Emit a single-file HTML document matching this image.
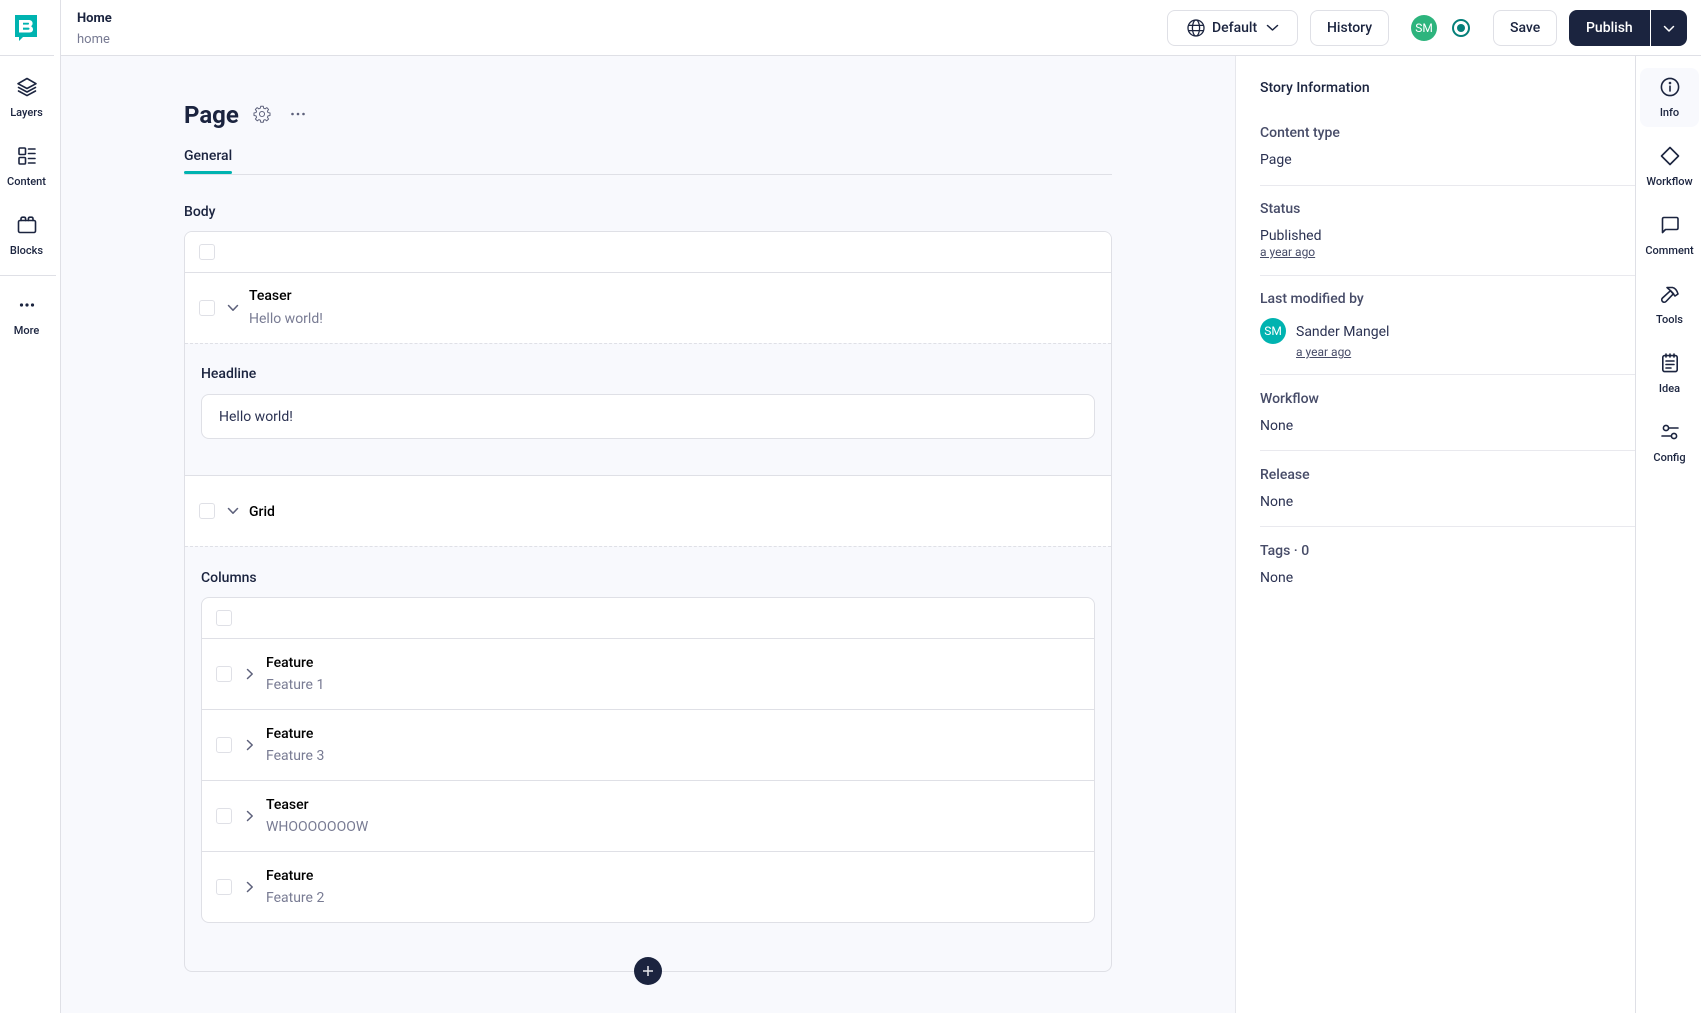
<!DOCTYPE html>
<html><head><meta charset="utf-8"><title>Home</title>
<style>
*{box-sizing:border-box}
html,body{margin:0;padding:0;width:1701px;height:1013px;overflow:hidden;background:#fff;font-family:"Roboto","Liberation Sans",sans-serif;color:#1b243f}
.a{position:absolute}
.t{position:absolute;line-height:20px;height:20px;white-space:nowrap;font-size:14px;margin-top:1px}
.m{font-weight:500}.b{font-weight:700}
.g{color:#787b93}
.s{color:#474c68}
.c{width:16px;height:16px;border:1px solid #dfe0e6;border-radius:3px;background:#fff;position:absolute}
.lb{position:absolute;font-size:11px;font-weight:500;line-height:14px;text-align:center;white-space:nowrap;margin-top:1px}
.ic{position:absolute;width:24px;height:24px;fill:none;stroke:#1b243f;stroke-width:1.6;stroke-linecap:round;stroke-linejoin:round}
.ln{position:absolute;background:#dfe0e6;height:1px}
.pl{position:absolute;background:#e9e9ee;height:1px;left:1260px;width:375px}
.btn{position:absolute;top:10px;height:36px;border:1px solid #dfe0e6;border-radius:8px;background:#fff}
.ch{position:absolute;fill:none;stroke:#5d617b;stroke-width:1.5;stroke-linecap:round;stroke-linejoin:round}
u{text-underline-offset:1px}
</style></head><body>
<!-- backgrounds -->
<div class="a" style="left:61px;top:56px;width:1174px;height:957px;background:#f8f9fd"></div>
<div class="a" style="left:60px;top:0;width:1px;height:1013px;background:#dfe0e6"></div>
<div class="a" style="left:60px;top:55px;width:1641px;height:1px;background:#dfe0e6"></div>
<div class="a" style="left:1235px;top:56px;width:1px;height:957px;background:#e6e7ec"></div>
<div class="a" style="left:1635px;top:56px;width:1px;height:957px;background:#dfe0e6"></div>
<div class="ln" style="left:0;top:55px;width:54px"></div>
<div class="ln" style="left:0;top:275px;width:56px"></div>

<!-- logo -->
<svg class="a" style="left:15px;top:15px" width="22" height="26" viewBox="0 0 22 26"><path fill="#00b3b0" fill-rule="evenodd" d="M0 0H22V22H8L4 26V22H0ZM4 5V17.5H14.5C16.8 17.5 18 16.2 18 14.4C18 12.9 17.2 11.8 16 11.2C17 10.6 17.6 9.6 17.6 8.4C17.6 6.2 16 5 13.6 5ZM8 7.8H13.4C13.8 7.8 14 8.1 14 8.6C14 9.2 13.7 9.6 13 9.6H8ZM8 12.6H13.4C14.2 12.6 14.5 13.1 14.5 13.6C14.5 14.2 14.2 14.7 13.4 14.7H8Z"/></svg>

<!-- left sidebar -->
<svg class="ic" style="left:15px;top:75px" viewBox="0 0 24 24"><path d="M12 3.5 21 8.7 12 13.5 3 8.7Z"/><path d="M3.5 12.4 12 17 20.5 12.4"/><path d="M3.5 16 12 20.6 20.5 16"/></svg>
<div class="lb" style="left:0;top:105px;width:53px">Layers</div>
<svg class="ic" style="left:15px;top:144px" viewBox="0 0 24 24"><rect x="4" y="4" width="6.5" height="6.5" rx="1"/><rect x="4" y="13.5" width="6.5" height="6.5" rx="1"/><path d="M13.5 5H20M13.5 9.5H20M13.5 14.5H20M13.5 19H20"/></svg>
<div class="lb" style="left:0;top:174px;width:53px">Content</div>
<svg class="ic" style="left:15px;top:213px" viewBox="0 0 24 24"><rect x="3.5" y="7.5" width="17" height="12" rx="1.5"/><path d="M6 7.5V5.8C6 4.8 6.8 4.2 7.6 4.2H9C9.9 4.2 10.6 4.8 10.6 5.8V7.5M13.4 7.5V5.8C13.4 4.8 14.1 4.2 15 4.2H16.4C17.3 4.2 18 4.8 18 5.8V7.5"/></svg>
<div class="lb" style="left:0;top:243px;width:53px">Blocks</div>
<svg class="a" style="left:19px;top:302px" width="16" height="6"><circle cx="2.5" cy="3" r="1.6" fill="#1b243f"/><circle cx="8" cy="3" r="1.6" fill="#1b243f"/><circle cx="13.5" cy="3" r="1.6" fill="#1b243f"/></svg>
<div class="lb" style="left:0;top:323px;width:53px">More</div>

<!-- header -->
<div class="t b" style="left:77px;top:8px;font-size:13px">Home</div>
<div class="t g" style="left:77px;top:29px;font-size:13px">home</div>

<div class="btn" style="left:1167px;width:131px"></div>
<svg class="a" style="left:1187px;top:19px;fill:none;stroke:#1b243f;stroke-width:1.3" width="18" height="18" viewBox="0 0 18 18"><circle cx="9" cy="9" r="8"/><ellipse cx="9" cy="9" rx="3.6" ry="8"/><path d="M1.4 6.4H16.6M1.4 11.6H16.6"/></svg>
<div class="t m" style="left:1212px;top:17px">Default</div>
<svg class="a" style="left:1266px;top:24px;fill:none;stroke:#1b243f;stroke-width:1.5;stroke-linecap:round;stroke-linejoin:round" width="13" height="8"><path d="M1.5 1.5 6.5 6 11.5 1.5"/></svg>
<div class="btn" style="left:1310px;width:79px"></div>
<div class="t m" style="left:1327px;top:17px">History</div>
<div class="a" style="left:1411px;top:15px;width:26px;height:26px;border-radius:50%;background:#2db47d;color:#fff;font-size:12px;line-height:27px;text-align:center">SM</div>
<div class="a" style="left:1452px;top:19px;width:18px;height:18px;border-radius:50%;border:2.2px solid #05807a"></div>
<div class="a" style="left:1457px;top:24px;width:8px;height:8px;border-radius:50%;background:#05807a"></div>
<div class="btn" style="left:1493px;width:64px"></div>
<div class="t m" style="left:1510px;top:17px">Save</div>
<div class="a" style="left:1569px;top:10px;width:118px;height:36px;border-radius:8px;background:#1b243f"></div>
<div class="a" style="left:1650px;top:10px;width:1px;height:36px;background:#fff"></div>
<div class="t m" style="left:1586px;top:17px;color:#fff">Publish</div>
<svg class="a" style="left:1663px;top:25px;fill:none;stroke:#fff;stroke-width:1.5;stroke-linecap:round;stroke-linejoin:round" width="12" height="8"><path d="M1.5 1.5 6 6 10.5 1.5"/></svg>

<!-- page heading -->
<div class="t b" style="left:184px;top:104px;font-size:24px;line-height:20px">Page</div>
<svg class="a" style="left:253px;top:105px;fill:none;stroke:#5d617b;stroke-width:1.3;stroke-linejoin:round" width="18" height="18" viewBox="0 0 24 24"><path d="M10.3 2.8h3.4l.5 2.7 1.9.8 2.3-1.6 2.4 2.4-1.6 2.3.8 1.9 2.7.5v3.4l-2.7.5-.8 1.9 1.6 2.3-2.4 2.4-2.3-1.6-1.9.8-.5 2.7h-3.4l-.5-2.7-1.9-.8-2.3 1.6-2.4-2.4 1.6-2.3-.8-1.9-2.7-.5v-3.4l2.7-.5.8-1.9L3.1 7.1 5.5 4.7l2.3 1.6 1.9-.8z" transform="translate(0 -1.2)"/><circle cx="12" cy="12" r="3.4"/></svg>
<svg class="a" style="left:290px;top:111px" width="16" height="6"><circle cx="2.5" cy="3" r="1.3" fill="#5d617b"/><circle cx="8" cy="3" r="1.3" fill="#5d617b"/><circle cx="13.5" cy="3" r="1.3" fill="#5d617b"/></svg>
<div class="t m" style="left:184px;top:145px">General</div>
<div class="a" style="left:184px;top:174px;width:928px;height:1px;background:#dfe0e6"></div>
<div class="a" style="left:184px;top:171px;width:48px;height:3px;background:#00b3b0;border-radius:2px"></div>
<div class="t m" style="left:184px;top:201px">Body</div>

<!-- body card -->
<div class="a" style="left:184px;top:231px;width:928px;height:741px;border:1px solid #dfe0e6;border-radius:8px;background:#f8f9fd"></div>
<div class="a" style="left:185px;top:232px;width:926px;height:111px;background:#fff;border-radius:7px 7px 0 0"></div>
<div class="a" style="left:185px;top:476px;width:926px;height:70px;background:#fff"></div>
<div class="c" style="left:199px;top:244px"></div>
<div class="ln" style="left:185px;top:272px;width:926px"></div>
<div class="c" style="left:199px;top:300px"></div>
<svg class="ch" style="left:227px;top:304px" width="12" height="8"><path d="M1.5 1.5 6 6.2 10.5 1.5"/></svg>
<div class="t m" style="left:249px;top:285px;color:#000">Teaser</div>
<div class="t g" style="left:249px;top:308px">Hello world!</div>
<div class="a" style="left:185px;top:343px;width:926px;border-top:1px dashed #dfe0e6"></div>
<div class="t m" style="left:201px;top:363px">Headline</div>
<div class="a" style="left:201px;top:394px;width:894px;height:45px;border:1px solid #dfe0e6;border-radius:8px;background:#fff"></div>
<div class="t" style="left:219px;top:406px;color:#2b3252">Hello world!</div>
<div class="ln" style="left:185px;top:475px;width:926px"></div>
<div class="c" style="left:199px;top:503px"></div>
<svg class="ch" style="left:227px;top:507px" width="12" height="8"><path d="M1.5 1.5 6 6.2 10.5 1.5"/></svg>
<div class="t m" style="left:249px;top:501px;color:#000">Grid</div>
<div class="a" style="left:185px;top:546px;width:926px;border-top:1px dashed #dfe0e6"></div>
<div class="t m" style="left:201px;top:567px">Columns</div>

<!-- columns card -->
<div class="a" style="left:201px;top:597px;width:894px;height:326px;border:1px solid #dfe0e6;border-radius:8px;background:#fff"></div>
<div class="c" style="left:216px;top:610px"></div>
<div class="ln" style="left:202px;top:638px;width:892px"></div>
<div class="ln" style="left:202px;top:709px;width:892px"></div>
<div class="ln" style="left:202px;top:780px;width:892px"></div>
<div class="ln" style="left:202px;top:851px;width:892px"></div>

<div class="c" style="left:216px;top:666px"></div>
<svg class="ch" style="left:246px;top:668px" width="8" height="12"><path d="M1.5 1.5 6.2 6 1.5 10.5"/></svg>
<div class="t m" style="left:266px;top:652px;color:#000">Feature</div>
<div class="t g" style="left:266px;top:674px">Feature 1</div>

<div class="c" style="left:216px;top:737px"></div>
<svg class="ch" style="left:246px;top:739px" width="8" height="12"><path d="M1.5 1.5 6.2 6 1.5 10.5"/></svg>
<div class="t m" style="left:266px;top:723px;color:#000">Feature</div>
<div class="t g" style="left:266px;top:745px">Feature 3</div>

<div class="c" style="left:216px;top:808px"></div>
<svg class="ch" style="left:246px;top:810px" width="8" height="12"><path d="M1.5 1.5 6.2 6 1.5 10.5"/></svg>
<div class="t m" style="left:266px;top:794px;color:#000">Teaser</div>
<div class="t g" style="left:266px;top:816px">WHOOOOOOOW</div>

<div class="c" style="left:216px;top:879px"></div>
<svg class="ch" style="left:246px;top:881px" width="8" height="12"><path d="M1.5 1.5 6.2 6 1.5 10.5"/></svg>
<div class="t m" style="left:266px;top:865px;color:#000">Feature</div>
<div class="t g" style="left:266px;top:887px">Feature 2</div>

<!-- add button -->
<div class="a" style="left:634px;top:957px;width:28px;height:28px;border-radius:50%;background:#1b243f"></div>
<svg class="a" style="left:642px;top:965px;stroke:#e6e7ec;stroke-width:1.5" width="12" height="12"><path d="M6 1V11M1 6H11"/></svg>

<!-- info panel -->
<div class="t m" style="left:1260px;top:77px">Story Information</div>
<div class="t m s" style="left:1260px;top:122px">Content type</div>
<div class="t" style="left:1260px;top:149px;color:#2b3252">Page</div>
<div class="pl" style="top:185px"></div>
<div class="t m s" style="left:1260px;top:198px">Status</div>
<div class="t" style="left:1260px;top:225px;color:#2b3252">Published</div>
<div class="t s" style="left:1260px;top:241px;font-size:12px"><u>a year ago</u></div>
<div class="pl" style="top:275px"></div>
<div class="t m s" style="left:1260px;top:288px">Last modified by</div>
<div class="a" style="left:1260px;top:318px;width:26px;height:26px;border-radius:50%;background:#00b3b0;color:#fff;font-size:12px;line-height:27px;text-align:center">SM</div>
<div class="t" style="left:1296px;top:321px;color:#2b3252">Sander Mangel</div>
<div class="t s" style="left:1296px;top:341px;font-size:12px"><u>a year ago</u></div>
<div class="pl" style="top:374px"></div>
<div class="t m s" style="left:1260px;top:388px">Workflow</div>
<div class="t" style="left:1260px;top:415px;color:#2b3252">None</div>
<div class="pl" style="top:450px"></div>
<div class="t m s" style="left:1260px;top:464px">Release</div>
<div class="t" style="left:1260px;top:491px;color:#2b3252">None</div>
<div class="pl" style="top:526px"></div>
<div class="t m s" style="left:1260px;top:540px">Tags · 0</div>
<div class="t" style="left:1260px;top:567px;color:#2b3252">None</div>

<!-- right sidebar -->
<div class="a" style="left:1640px;top:68px;width:59px;height:59px;border-radius:8px;background:#f8f9fd"></div>
<svg class="ic" style="left:1658px;top:75px" viewBox="0 0 24 24"><circle cx="12" cy="12" r="8.6"/><path d="M12 11.2V16"/><circle cx="12" cy="8" r=".5"/></svg>
<div class="lb" style="left:1635px;top:105px;width:69px">Info</div>
<svg class="ic" style="left:1658px;top:144px" viewBox="0 0 24 24"><path d="M12 3.5 20.5 12 12 20.5 3.5 12Z"/></svg>
<div class="lb" style="left:1635px;top:174px;width:69px">Workflow</div>
<svg class="ic" style="left:1658px;top:213px" viewBox="0 0 24 24"><path d="M4.5 19.5V6C4.5 5 5.2 4.5 6 4.5H18.5C19.3 4.5 20 5 20 6V15C20 16 19.3 16.5 18.5 16.5H7.5Z"/></svg>
<div class="lb" style="left:1635px;top:243px;width:69px">Comment</div>
<svg class="ic" style="left:1658px;top:281px" viewBox="0 0 24 24"><path d="M9 6.5H14.5C17 7 19 9.5 20 13L17 15 12.5 9.7Z"/><path d="M12.5 9.7 15.5 12.7 8 20.5C7 21.5 5.5 21.5 4.5 20.5C3.5 19.5 3.5 18 4.5 17Z"/></svg>
<div class="lb" style="left:1635px;top:312px;width:69px">Tools</div>
<svg class="ic" style="left:1658px;top:351px" viewBox="0 0 24 24"><rect x="4.8" y="4.6" width="14.4" height="16" rx="1.8"/><path d="M8 3V6M12 3V6M16 3V6M8 10H16M8 13.5H16M8 17H13"/></svg>
<div class="lb" style="left:1635px;top:381px;width:69px">Idea</div>
<svg class="ic" style="left:1658px;top:420px" viewBox="0 0 24 24"><circle cx="8" cy="8" r="2.6"/><circle cx="16" cy="16" r="2.6"/><path d="M10.6 8H20M4 16H13.4"/></svg>
<div class="lb" style="left:1635px;top:450px;width:69px">Config</div>
</body></html>
